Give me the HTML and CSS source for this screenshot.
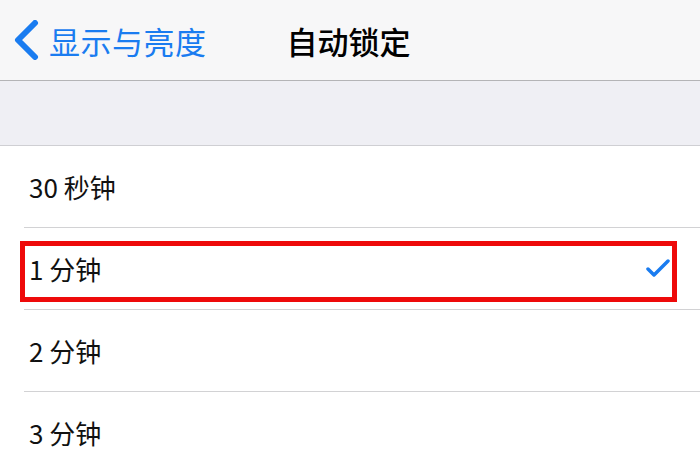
FILE: index.html
```html
<!DOCTYPE html>
<html lang="zh-CN">
<head>
    <meta charset="UTF-8">
    <title>自动锁定</title>
    <link rel="stylesheet" href="styles.css">
</head>
<body>
<div class="navbar">
    <div class="back">
        <svg class="chevron" width="26" height="40" viewBox="0 0 26 40">
            <polyline points="21 3 4 20 21 37" fill="none" stroke="#1a7cf0" stroke-width="6" stroke-linecap="round" stroke-linejoin="round"/>
        </svg>
        <span class="back-text">显示与亮度</span>
    </div>
    <div class="title">自动锁定</div>
</div>
<div class="spacer"></div>
<ul class="list">
    <li class="item"><span>30 秒钟</span></li>
    <li class="item selected">
        <span>1 分钟</span>
        <svg class="check" width="24" height="19" viewBox="0 0 24 19">
            <polyline points="2 10 8 16 22 2" fill="none" stroke="#1a7cf0" stroke-width="3.5" stroke-linecap="round" stroke-linejoin="round"/>
        </svg>
    </li>
    <li class="item"><span>2 分钟</span></li>
    <li class="item"><span>3 分钟</span></li>
</ul>
</body>
</html>
```

FILE: styles.css
```css
* {
    padding: 0;
    margin: 0;
}
body {
    width: 700px;
    height: 473px;
    overflow: hidden;
    background: #fff;
    font-family: "Noto Sans CJK SC", "Liberation Sans", sans-serif;
    color: #111;
}
.navbar {
    height: 80px;
    background: #f7f7f8;
    border-bottom: 1px solid #b4b4b6;
    display: flex;
    align-items: center;
}
.back {
    display: flex;
    align-items: center;
    padding-left: 14px;
}
.chevron {
    margin-top: -1px;
}
.back-text {
    margin-left: 9px;
    font-size: 31px;
    color: #1a7cf0;
    letter-spacing: 0.5px;
}
.title {
    margin-left: 80px;
    font-size: 31px;
    font-weight: 500;
    color: #000;
}
.spacer {
    height: 64px;
    background: #efeff4;
    border-bottom: 1px solid #cfcfd3;
}
.list {
    list-style: none;
}
.item {
    height: 81px;
    margin-left: 24px;
    padding-left: 5px;
    border-bottom: 1px solid #d2d2d4;
    display: flex;
    align-items: center;
    justify-content: space-between;
    font-size: 26px;
}
.item.selected {
    position: relative;
}
/* 红色标注框 */
.item.selected::before {
    content: "";
    position: absolute;
    left: -4px;
    top: 13px;
    width: 647px;
    height: 51px;
    border: 5px solid #ee0a0a;
}
.check {
    margin-right: 30px;
}
```
